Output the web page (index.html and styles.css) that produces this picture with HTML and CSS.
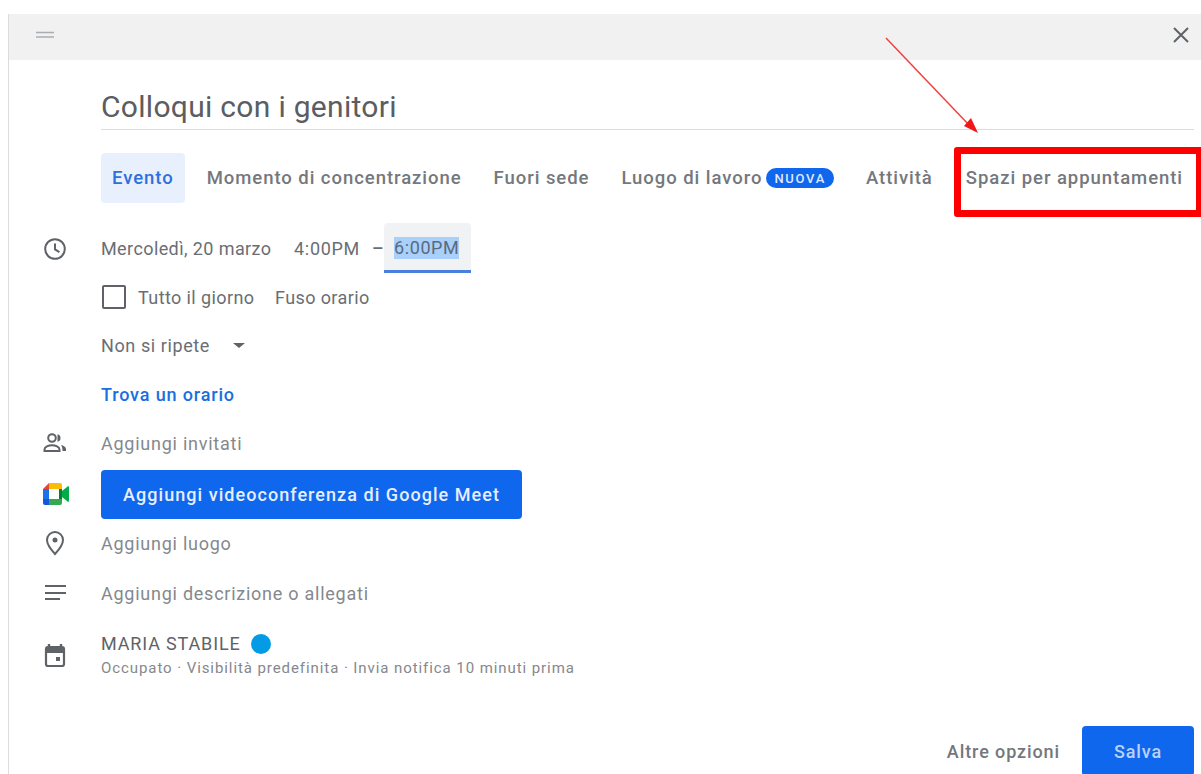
FILE: index.html
```html
<!DOCTYPE html>
<html lang="it">
<head>
<meta charset="utf-8">
<title>Colloqui con i genitori</title>
<link rel="stylesheet" href="styles.css">
</head>
<body>
<div class="dialog">
  <header class="topbar">
    <svg class="drag" width="20" height="8" viewBox="0 0 20 8"><path d="M1 1.500h18M1 6h18" stroke="#a9adb2" stroke-width="1.600"/></svg>
    <svg class="close" width="16" height="16" viewBox="0 0 16 16"><path d="M1 1l14 14M15 1L1 15" stroke="#5f6368" stroke-width="2"/></svg>
  </header>

  <div class="title-row">
    <div class="title">Colloqui con i genitori</div>
  </div>

  <nav class="tabs">
    <span class="tab tab-active">Evento</span>
    <span class="tab">Momento di concentrazione</span>
    <span class="tab">Fuori sede</span>
    <span class="tab">Luogo di lavoro<span class="badge">NUOVA</span></span>
    <span class="tab tab-tasks">Attività</span>
    <span class="tab">Spazi per appuntamenti</span>
  </nav>

  <section class="row row-date">
    <svg class="icon" width="24" height="24" viewBox="0 0 24 24"><circle cx="12" cy="12" r="9.800" fill="none" stroke="#5f6368" stroke-width="2"/><path d="M12 6.500V12.400l4.400 2.700" fill="none" stroke="#5f6368" stroke-width="2"/></svg>
    <div class="content date-line">
      <span class="date">Mercoledì, 20 marzo</span>
      <span class="time">4:00PM</span>
      <span class="dash">–</span>
      <span class="time-field"><span class="selected">6:00PM</span></span>
    </div>
  </section>

  <section class="row row-allday">
    <span class="icon-gap"></span>
    <div class="content allday">
      <span class="checkbox"></span>
      <span class="allday-label">Tutto il giorno</span>
      <span>Fuso orario</span>
    </div>
  </section>

  <section class="row row-repeat">
    <span class="icon-gap"></span>
    <div class="content repeat">
      <span>Non si ripete</span>
      <span class="caret"></span>
    </div>
  </section>

  <section class="row row-find">
    <span class="icon-gap"></span>
    <div class="content link">Trova un orario</div>
  </section>

  <section class="row row-guests">
    <svg class="icon" width="26" height="24" viewBox="0 0 26 24"><g fill="none" stroke="#5f6368" stroke-width="2"><circle cx="10" cy="7" r="3.800"/><path d="M2.500 20v-1.600c0-2.600 4-4.200 7.500-4.200s7.500 1.600 7.500 4.200V20z"/></g><path d="M15.500 3.200a3.900 3.900 0 0 1 0 7.600z" fill="#5f6368"/><path d="M19 14c2.500.6 5 1.800 5 4.200V20h-3.500c0-2.400-.3-4.500-1.500-6z" fill="#5f6368"/></svg>
    <div class="content muted">Aggiungi invitati</div>
  </section>

  <section class="row row-meet">
    <svg class="icon" width="26" height="22" viewBox="0 0 26 22">
      <path d="M0 6L6 0v6z" fill="#ea4335"/>
      <path d="M6 0h11a2 2 0 0 1 2 2v4H6z" fill="#fbbc04"/>
      <path d="M0 6h6v10H0z" fill="#1a73e8"/>
      <path d="M0 16h6v6H2a2 2 0 0 1-2-2z" fill="#1558d6"/>
      <path d="M6 16h13v4a2 2 0 0 1-2 2H6z" fill="#34a853"/>
      <path d="M16 6h3v10h-3z" fill="#00832d"/>
      <path d="M19 8l5-4a1 1 0 0 1 2 .5v13a1 1 0 0 1-2 .5l-5-4z" fill="#00ac47"/>
    </svg>
    <div class="content"><span class="meet-button">Aggiungi videoconferenza di Google Meet</span></div>
  </section>

  <section class="row row-place">
    <svg class="icon" width="24" height="26" viewBox="0 0 24 26"><path d="M12 2a8 8 0 0 0-8 8c0 5.300 8 14 8 14s8-8.700 8-14a8 8 0 0 0-8-8z" fill="none" stroke="#5f6368" stroke-width="2"/><circle cx="12" cy="10" r="2.500" fill="#5f6368"/></svg>
    <div class="content muted">Aggiungi luogo</div>
  </section>

  <section class="row row-desc">
    <svg class="icon" width="24" height="24" viewBox="0 0 24 24"><path d="M2 5h21M2 12h21M2 18h15" stroke="#5f6368" stroke-width="1.800"/></svg>
    <div class="content muted">Aggiungi descrizione o allegati</div>
  </section>

  <section class="row row-owner">
    <svg class="icon" width="24" height="26" viewBox="0 0 24 26"><path d="M6 1v4M18 1v4" stroke="#5f6368" stroke-width="2.400"/><rect x="3" y="4" width="18" height="19" rx="2" fill="none" stroke="#5f6368" stroke-width="2.200"/><path d="M3 5h18v5H3z" fill="#5f6368"/><rect x="13" y="14" width="4" height="4" fill="#5f6368"/></svg>
    <div class="content owner">
      <div class="owner-name">MARIA STABILE<span class="dot"></span></div>
      <div class="owner-meta">Occupato · Visibilità predefinita · Invia notifica 10 minuti prima</div>
    </div>
  </section>

  <footer class="actions">
    <span class="more">Altre opzioni</span>
    <span class="save">Salva</span>
  </footer>
</div>

<!-- Red callout drawn on top of the dialog -->
<div class="callout-box"></div>
<svg class="callout-arrow" width="100" height="104" viewBox="0 0 100 104">
  <path d="M2 2L86 90" stroke="#f24040" stroke-width="1.500" fill="none"/>
  <path d="M94 97L80 90l7-8z" fill="#f01818"/>
</svg>
</body>
</html>
```
FILE: styles.css
```css
html, body {
  margin: 0;
  height: 100%;
  background: #fff;
  overflow: hidden;
}

body {
  font-family: Roboto, "Liberation Sans", sans-serif;
  color: #5f6368;
  position: relative;
}

.dialog {
  box-sizing: border-box;
  margin: 14px 0 0 8px;
  height: 760px;
  border-left: 1px solid #dcdcdc;
  overflow: hidden;
}

.topbar {
  height: 46px;
  background: #f1f1f1;
  display: flex;
  align-items: center;
  justify-content: space-between;
  padding: 0 12px 0 26px;
}

.drag { margin-top: -5px; }
.close { margin-top: -5px; }

.title-row {
  margin-left: 92px;
  margin-right: 7px;
  height: 69px;
  border-bottom: 1px solid #dadce0;
  display: flex;
  align-items: flex-end;
}

.title {
  font-size: 30px;
  line-height: 46px;
  color: #5a5d61;
  letter-spacing: .3px;
  margin-bottom: -1px;
}

.tabs {
  margin: 23px 0 0 92px;
  display: flex;
  align-items: center;
  height: 50px;
  font-size: 18.500px;
  font-weight: 500;
  letter-spacing: .95px;
  color: #74787d;
  white-space: nowrap;
}

.tab {
  display: flex;
  align-items: center;
  margin-right: 32px;
}

.tab-tasks { margin-right: 33px; }

.tab-active {
  height: 50px;
  box-sizing: border-box;
  padding: 0 11px;
  margin-right: 22px;
  background: #e8f0fe;
  color: #2f6fdb;
  border-radius: 4px;
}

.badge {
  margin-left: 4px;
  height: 20px;
  padding: 0 8px;
  border-radius: 10px;
  background: #0f67ee;
  color: #dfe9ff;
  font-size: 13px;
  letter-spacing: 1.700px;
  display: flex;
  align-items: center;
}

.row {
  display: flex;
  align-items: center;
  font-size: 18px;
  letter-spacing: .6px;
}

.icon {
  flex: none;
  margin-left: 34px;
  margin-right: 34px;
}

.icon-gap {
  flex: none;
  width: 92px;
}

.content { flex: 1; color: #6a6e73; }

.row-date { height: 50px; margin-top: 20px; }
.row-date .icon { margin-top: 1px; }

.date-line {
  display: flex;
  align-items: center;
  letter-spacing: .4px;
}

.date { width: 193px; }
.time { width: 78px; letter-spacing: .7px; }
.dash { width: 12px; font-weight: 500; }

.time-field {
  box-sizing: border-box;
  width: 87px;
  height: 50px;
  background: #f1f2f3;
  border-bottom: 3px solid #4a7fe0;
  border-radius: 4px 4px 0 0;
  display: flex;
  align-items: center;
  padding: 3px 0 0 10px;
}

.selected {
  background: #a9d0fb;
  line-height: 22px;
  color: #5b6a7c;
  letter-spacing: .6px;
}

.row-allday { height: 48px; }

.allday {
  display: flex;
  align-items: center;
  letter-spacing: .4px;
}

.checkbox {
  box-sizing: border-box;
  width: 24px;
  height: 24px;
  margin-left: 1px;
  border: 2px solid #5f6368;
  border-radius: 2px;
}

.allday-label { margin-left: 12px; width: 137px; }

.row-repeat { height: 49px; }

.repeat { display: flex; align-items: center; }

.caret {
  margin-left: 23px;
  width: 0;
  height: 0;
  border-left: 6px solid transparent;
  border-right: 6px solid transparent;
  border-top: 5px solid #5f6368;
}

.row-find { height: 49px; }

.link {
  color: #1a6fe0;
  font-weight: 500;
  letter-spacing: .85px;
}

.row-guests { height: 48px; }
.row-guests .icon { margin-left: 33px; margin-right: 33px; }

.muted { color: #85888d; letter-spacing: .75px; }

.row-meet { height: 50px; margin-top: 2px; }
.row-meet .icon { margin-left: 34px; margin-right: 32px; }

.meet-button {
  display: inline-flex;
  align-items: center;
  box-sizing: border-box;
  width: 421px;
  height: 49px;
  padding-left: 22px;
  background: #0f67ee;
  color: #e6eeff;
  border-radius: 4px;
  font-weight: 500;
  letter-spacing: 1.050px;
  white-space: nowrap;
}

.row-place { height: 50px; margin-top: -1px; }
.row-desc { height: 50px; }

.row-owner { height: 64px; margin-top: 6px; }

.owner-name {
  display: flex;
  align-items: center;
  color: #5f6368;
  line-height: 24px;
  letter-spacing: .85px;
}

.dot {
  width: 20px;
  height: 20px;
  margin-left: 10px;
  border-radius: 50%;
  background: #039be5;
}

.owner-meta {
  font-size: 15px;
  letter-spacing: .92px;
  color: #85888d;
  line-height: 24px;
}

.actions {
  display: flex;
  justify-content: flex-end;
  align-items: center;
  margin-top: 38px;
  margin-right: 7px;
  font-size: 18px;
  font-weight: 500;
  letter-spacing: .9px;
}

.more { margin-right: 22px; color: #74787d; }

.save {
  box-sizing: border-box;
  width: 112px;
  height: 50px;
  background: #0f67ee;
  color: #b9d1fb;
  border-radius: 4px;
  display: flex;
  align-items: center;
  justify-content: center;
}

/* Annotation layer */
.callout-box {
  position: absolute;
  left: 954px;
  top: 147px;
  width: 249px;
  height: 70px;
  box-sizing: border-box;
  border: 7px solid #fe0000;
  border-radius: 3px;
}

.callout-arrow {
  position: absolute;
  left: 884px;
  top: 36px;
}
```
